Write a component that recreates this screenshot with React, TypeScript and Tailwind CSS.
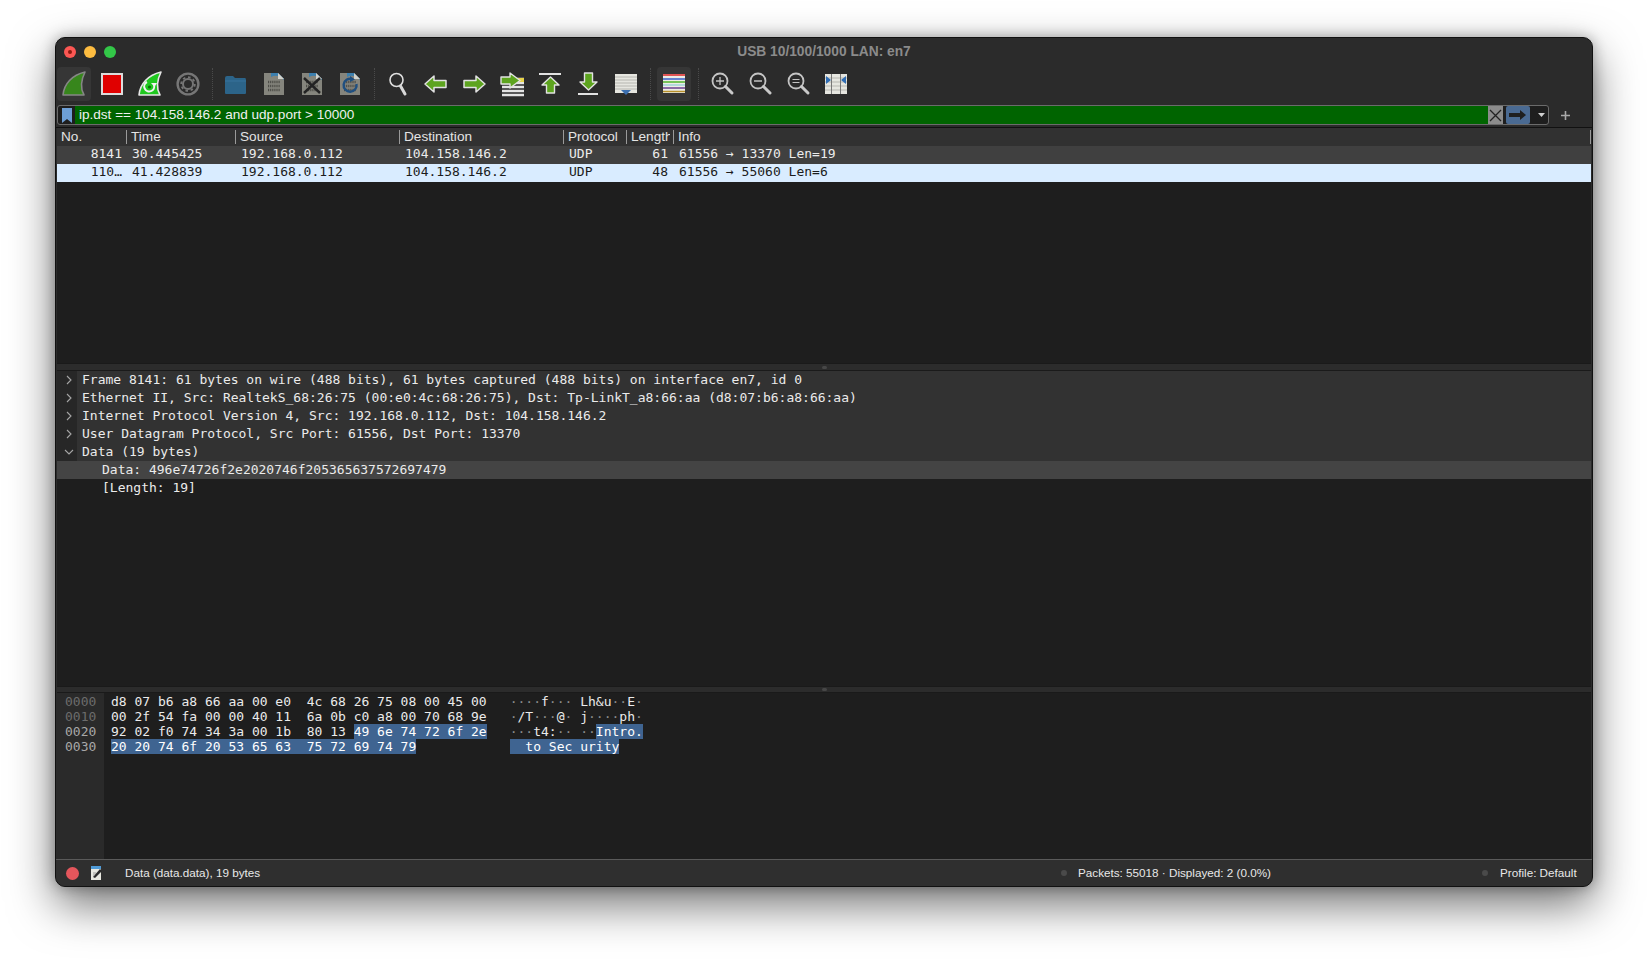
import React from 'react';

const Icon: React.FC<{ children: React.ReactNode; active?: boolean }> = ({ children, active }) => (
  <div className={`flex h-[34px] w-[34px] shrink-0 items-center justify-center rounded-[4px] ${active ? 'bg-[#363636]' : ''}`}>
    <svg width="32" height="32" viewBox="0 0 32 32" fill="none">
      {children}
    </svg>
  </div>
);

const Sep = () => (
  <div className="flex h-[34px] w-[6px] shrink-0 justify-center py-[1px]">
    <div className="h-full border-l border-dotted border-[#4a4a4a]" />
  </div>
);

const FileShape: React.FC<{ children?: React.ReactNode }> = ({ children }) => (
  <g>
    <path d="M6 5 H20 L26 11 V27 H6 Z" fill="#85857d" />
    <path d="M13 5 H20 L26 11 V12 C21 7 17 7 13 9 Z" fill="#3c7fae" />
    <path d="M20 5 V11 H26 Z" fill="#d2d2cc" />
    {[14, 18, 22].map((y) => (
      <line key={y} x1="10" x2="22" y1={y} y2={y} stroke="#4c4c47" strokeWidth="2.4" strokeDasharray="1.2 0.9" />
    ))}
    {children}
  </g>
);

const Lens: React.FC<{ children?: React.ReactNode }> = ({ children }) => (
  <g>
    <circle cx="14" cy="13" r="7.5" stroke="#c4c4c4" strokeWidth="1.8" />
    <path d="M19.5 18.5 L26 25" stroke="#c9c9c9" strokeWidth="3" strokeLinecap="round" />
    {children}
  </g>
);

const Toolbar = () => (
  <div className="flex h-[39px] shrink-0 items-start gap-[4px] pl-[1px] pt-[1px]">
    <Icon active>
      <path d="M5 27 C6 16 14 7 27 4 C23 12 22 20 26 27 Z" fill="#37861c" stroke="#868686" strokeWidth="1.6" strokeLinejoin="round" />
    </Icon>
    <Icon>
      <rect x="6" y="6" width="20" height="20" fill="#e00000" stroke="#dcdcdc" strokeWidth="2" />
    </Icon>
    <Icon>
      <path d="M5 27 C6 16 14 7 27 4 C23 12 22 20 26 27 Z" fill="#1fc81f" stroke="#e6e6e6" strokeWidth="1.6" strokeLinejoin="round" />
      <path d="M20 17 A5 5 0 1 1 13 14" stroke="#f2f2f2" strokeWidth="2" />
      <path d="M17 15 L20.5 19 L23 15 Z" fill="#f2f2f2" />
      <circle cx="15.5" cy="19" r="1.6" fill="#0c6d0c" />
    </Icon>
    <Icon>
      <circle cx="16" cy="16" r="10.4" stroke="#767676" strokeWidth="2.4" />
      <circle cx="16" cy="16" r="5" stroke="#767676" strokeWidth="2" />
      <circle cx="16" cy="16" r="6.8" stroke="#767676" strokeWidth="1.8" strokeDasharray="2.6 2.7" />
    </Icon>
    <Sep />
    <Icon>
      <path d="M5 10 Q5 8 7 8 H13 L15 10 H25 Q26 10 26 12 V25 Q26 26 25 26 H6 Q5 26 5 25 Z" fill="#2c6489" />
      <path d="M5 13 H26" stroke="#37729c" strokeWidth="1" />
    </Icon>
    <Icon>
      <FileShape />
    </Icon>
    <Icon>
      <FileShape>
        <path d="M8 10 L24 25 M24 10 L8 25" stroke="#232323" strokeWidth="2.4" />
      </FileShape>
    </Icon>
    <Icon>
      <FileShape>
        <path d="M18 11 A6.5 6.5 0 1 0 22.5 16" stroke="#1f4f80" strokeWidth="2.4" />
        <path d="M16 8 L21 11.5 L16 14 Z" fill="#1f4f80" />
      </FileShape>
    </Icon>
    <Sep />
    <Icon>
      <circle cx="14.5" cy="12" r="6.5" stroke="#dedede" strokeWidth="1.6" />
      <path d="M18.5 18 L23 26" stroke="#d8d8d8" strokeWidth="3" strokeLinecap="round" />
    </Icon>
    <Icon>
      <path d="M5 16 L14 8 V12.5 H26 V19.5 H14 V24 Z" fill="#5da41f" stroke="#e2e2e2" strokeWidth="1.5" strokeLinejoin="round" />
    </Icon>
    <Icon>
      <path d="M27 16 L18 8 V12.5 H6 V19.5 H18 V24 Z" fill="#5da41f" stroke="#e2e2e2" strokeWidth="1.5" strokeLinejoin="round" />
    </Icon>
    <Icon>
      <path d="M6 11 H28 M6 15 H28 M6 19 H28 M6 23 H28 M6 27 H28" stroke="#e4e4e4" strokeWidth="2.4" />
      <rect x="22" y="10" width="6" height="4" fill="#e8d44a" />
      <path d="M5 9 H14 V5 L24 12.5 L14 20 V16 H5 Z" fill="#5da41f" stroke="#e2e2e2" strokeWidth="1.4" strokeLinejoin="round" />
    </Icon>
    <Icon>
      <path d="M5 6 H27" stroke="#e2e2e2" strokeWidth="1.8" />
      <path d="M16.5 9 L25 17 H20.5 V25 H12.5 V17 H8 Z" fill="#5da41f" stroke="#e2e2e2" strokeWidth="1.4" strokeLinejoin="round" />
    </Icon>
    <Icon>
      <path d="M6 26 H26" stroke="#e2e2e2" strokeWidth="1.8" />
      <path d="M16.5 22 L25 14 H20.5 V5 H12.5 V14 H8 Z" fill="#5da41f" stroke="#e2e2e2" strokeWidth="1.4" strokeLinejoin="round" />
    </Icon>
    <Icon>
      <rect x="5" y="6" width="22" height="19" fill="#e6e6e0" />
      <path d="M5 9 H27 M5 12 H27 M5 15 H27 M5 18 H27 M5 21 H27" stroke="#a9a9a4" strokeWidth="0.8" />
      <path d="M11 22 H21 L16 27 Z" fill="#3c6fb0" />
    </Icon>
    <Sep />
    <Icon active>
      <rect x="5" y="6" width="22" height="19" fill="#ecece6" />
      <path d="M5 7 H27" stroke="#dd2222" strokeWidth="1.3" />
      <path d="M5 11 H27" stroke="#3a5fc8" strokeWidth="1.3" />
      <path d="M5 14 H27" stroke="#4fb52a" strokeWidth="1.3" />
      <path d="M5 17 H27" stroke="#9fd3d8" strokeWidth="1.3" />
      <path d="M5 20 H27" stroke="#6b3f8f" strokeWidth="1.3" />
      <path d="M5 23.5 H27" stroke="#b8912a" strokeWidth="1.3" />
    </Icon>
    <Sep />
    <Icon>
      <Lens>
        <path d="M10 13 H18 M14 9 V17" stroke="#c4c4c4" strokeWidth="1.3" />
      </Lens>
    </Icon>
    <Icon>
      <Lens>
        <path d="M10 13 H18" stroke="#c4c4c4" strokeWidth="1.3" />
      </Lens>
    </Icon>
    <Icon>
      <Lens>
        <path d="M10.5 11.5 H17.5 M10.5 14.5 H17.5" stroke="#c4c4c4" strokeWidth="1.2" />
      </Lens>
    </Icon>
    <Icon>
      <rect x="5" y="6" width="22" height="20" fill="#e6e6e0" />
      <path d="M5 10 H27 M5 14 H27 M5 18 H27 M5 22 H27" stroke="#a9a9a4" strokeWidth="0.8" />
      <path d="M11.5 6 V26 M20.5 6 V26" stroke="#777" strokeWidth="1" />
      <path d="M6 8 L11 12 L6 16 Z M26 8 L21 12 L26 16 Z" fill="#2f6db5" />
    </Icon>
  </div>
);

const FilterBar = () => (
  <div className="flex h-[22px] shrink-0 items-start pl-[1px]">
    <div className="flex h-[20px] w-[1492px] items-stretch overflow-hidden rounded-[3px] border border-[#6b6b6b] bg-[#1e1e1e]">
      <div className="flex w-[17px] shrink-0 items-center justify-center">
        <svg width="10" height="15" viewBox="0 0 10 15">
          <path d="M0 0 H10 V15 L5 11 L0 15 Z" fill="#6d9fd6" />
        </svg>
      </div>
      <div className="flex flex-1 items-center bg-[#006400] pl-[4px] text-[13.55px] text-[#f0f0f0]">
        ip.dst == 104.158.146.2 and udp.port &gt; 10000
      </div>
      <div className="flex w-[15px] shrink-0 items-center justify-center bg-[#8c8c8c]">
        <svg width="13" height="13" viewBox="0 0 13 13">
          <path d="M1 1 L12 12 M12 1 L1 12" stroke="#222" strokeWidth="1.3" />
        </svg>
      </div>
      <div className="ml-[3px] flex w-[24px] shrink-0 items-center justify-center rounded-[2px] bg-[#4a6a92]">
        <svg width="18" height="10" viewBox="0 0 18 10">
          <path d="M0 3 H11 V0 L17 5 L11 10 V7 H0 Z" fill="#1f1f1f" />
        </svg>
      </div>
      <div className="flex flex-1 grow-0 basis-[18px] items-center justify-center pl-[4px]">
        <svg width="7" height="4" viewBox="0 0 7 4">
          <path d="M0 0 H7 L3.5 4 Z" fill="#d0d0d0" />
        </svg>
      </div>
    </div>
    <div className="ml-[10px] flex h-[20px] w-[12px] items-center justify-center">
      <svg width="9" height="9" viewBox="0 0 9 9">
        <path d="M4.5 0 V9 M0 4.5 H9" stroke="#a8a8a8" strokeWidth="1.6" />
      </svg>
    </div>
  </div>
);

const headers = ['No.', 'Time', 'Source', 'Destination', 'Protocol', 'Length', 'Info'];

const packets = [
  ['8141', '30.445425', '192.168.0.112', '104.158.146.2', 'UDP', '61', '61556 → 13370 Len=19'],
  ['110…', '41.428839', '192.168.0.112', '104.158.146.2', 'UDP', '48', '61556 → 55060 Len=6'],
];

const gridCols = 'grid grid-cols-[69px_109px_164px_164px_63px_47px_1fr]';

const PacketList = () => (
  <div className="flex h-[235px] shrink-0 flex-col bg-[#1e1e1e]">
    <div className={`${gridCols} h-[18px] shrink-0 items-center bg-[#313131] text-[13.6px] text-[#e4e4e4]`}>
      {headers.map((h, i) => (
        <div
          key={h}
          className={`h-[14px] pl-[4px] pr-[3px] leading-[14px] ${i > 0 ? 'border-l border-[#9a9a9a]' : ''} ${i === 6 ? 'border-r' : ''}`}
        >
          <div className="overflow-hidden whitespace-nowrap">{h}</div>
        </div>
      ))}
    </div>
    {packets.map((p, r) => (
      <div
        key={p[0]}
        className={`${gridCols} h-[18px] shrink-0 items-start font-['DejaVu_Sans_Mono',monospace] text-[13px] leading-[16px] ${
          r === 1 ? 'bg-[#d9ecff] text-[#1c1c1c]' : 'bg-[#404040] text-[#ececec]'
        }`}
      >
        <div className="pr-[4px] text-right">{p[0]}</div>
        <div className="pl-[6px]">{p[1]}</div>
        <div className="pl-[6px]">{p[2]}</div>
        <div className="pl-[6px]">{p[3]}</div>
        <div className="pl-[6px]">{p[4]}</div>
        <div className="pr-[5px] text-right">{p[5]}</div>
        <div className="pl-[6px] whitespace-pre">{p[6]}</div>
      </div>
    ))}
  </div>
);

const Splitter: React.FC<{ h: string }> = ({ h }) => (
  <div className={`flex ${h} shrink-0 items-center justify-center border-y border-[#1a1a1a] bg-[#2c2c2c]`}>
    <div className="h-[3px] w-[5px] rounded-full bg-[#474747]" />
  </div>
);

const tree = [
  'Frame 8141: 61 bytes on wire (488 bits), 61 bytes captured (488 bits) on interface en7, id 0',
  'Ethernet II, Src: RealtekS_68:26:75 (00:e0:4c:68:26:75), Dst: Tp-LinkT_a8:66:aa (d8:07:b6:a8:66:aa)',
  'Internet Protocol Version 4, Src: 192.168.0.112, Dst: 104.158.146.2',
  'User Datagram Protocol, Src Port: 61556, Dst Port: 13370',
  'Data (19 bytes)',
];

const PacketDetails = () => (
  <div className="flex h-[315px] shrink-0 flex-col bg-[#1e1e1e] font-['DejaVu_Sans_Mono',monospace] text-[13px] leading-[18px] text-[#ebebeb]">
    {tree.map((line, i) => (
      <div key={line} className="flex h-[18px] shrink-0">
        <div className="flex w-[20px] shrink-0 items-center justify-center bg-[#272727] pl-[4px]">
          <svg width="10" height="10" viewBox="0 0 10 10" fill="none">
            <path d={i === 4 ? 'M1 3 L5 7 L9 3' : 'M3 1 L7 5 L3 9'} stroke="#a6a6a6" strokeWidth="1.1" />
          </svg>
        </div>
        <div className="flex-1 whitespace-pre bg-[#323232] pl-[5px]">{line}</div>
      </div>
    ))}
    <div className="h-[18px] shrink-0 bg-[#444444] pl-[45px]">Data: 496e74726f2e2020746f205365637572697479</div>
    <div className="h-[18px] shrink-0 pl-[45px]">[Length: 19]</div>
  </div>
);

type Seg = [string, boolean];

const hexRows: { off: string; dim: boolean; hex: Seg[]; ascii: Seg[] }[] = [
  {
    off: '0000',
    dim: true,
    hex: [['d8 07 b6 a8 66 aa 00 e0  4c 68 26 75 08 00 45 00', false]],
    ascii: [['····f··· Lh&u··E·', false]],
  },
  {
    off: '0010',
    dim: true,
    hex: [['00 2f 54 fa 00 00 40 11  6a 0b c0 a8 00 70 68 9e', false]],
    ascii: [['·/T···@· j····ph·', false]],
  },
  {
    off: '0020',
    dim: false,
    hex: [
      ['92 02 f0 74 34 3a 00 1b  80 13 ', false],
      ['49 6e 74 72 6f 2e', true],
    ],
    ascii: [
      ['···t4:·· ··', false],
      ['Intro.', true],
    ],
  },
  {
    off: '0030',
    dim: false,
    hex: [['20 20 74 6f 20 53 65 63  75 72 69 74 79', true]],
    ascii: [['  to Sec urity', true]],
  },
];

const AsciiSeg: React.FC<{ text: string; on: boolean }> = ({ text, on }) => (
  <span className={on ? 'bg-[#3f6491] text-white' : ''}>
    {text.split('').map((c, i) => (
      <span key={i} className={c === '·' ? 'text-[#8a8a8a]' : ''}>
        {c}
      </span>
    ))}
  </span>
);

const HexDump = () => (
  <div className="flex min-h-0 flex-1 bg-[#1e1e1e] font-['DejaVu_Sans_Mono',monospace] text-[13px] leading-[15px] text-[#ebebeb]">
    <div className="w-[47px] shrink-0 bg-[#2a2a2a] pl-[8px] pt-[1px]">
      {hexRows.map((r) => (
        <div key={r.off} className={`h-[15px] ${r.dim ? 'text-[#6c6c6c]' : 'text-[#a8a8a8]'}`}>
          {r.off}
        </div>
      ))}
    </div>
    <div className="pl-[7px] pt-[1px]">
      {hexRows.map((r) => (
        <div key={r.off} className="h-[15px] whitespace-pre">
          {r.hex.map(([t, on]) => (
            <span key={t} className={on ? 'bg-[#3f6491] text-white' : ''}>
              {t}
            </span>
          ))}
        </div>
      ))}
    </div>
    <div className="pl-[23px] pt-[1px]">
      {hexRows.map((r) => (
        <div key={r.off} className="h-[15px] whitespace-pre">
          {r.ascii.map(([t, on]) => (
            <AsciiSeg key={t} text={t} on={on} />
          ))}
        </div>
      ))}
    </div>
  </div>
);

const StatusBar = () => (
  <div className="flex h-[27px] shrink-0 items-center border-t border-[#5a5a5a] bg-[#2f2f2f] text-[11.7px] text-[#e8e8e8]">
    <div className="ml-[10px] h-[13px] w-[13px] rounded-full bg-[#e4565c]" />
    <svg className="ml-[11px]" width="14" height="14" viewBox="0 0 14 14">
      <rect x="1" y="2" width="10" height="12" fill="#e8e8e0" />
      <rect x="1" y="0" width="10" height="3" fill="#4f9bd8" />
      <path d="M3 11 L10 3 L12 5 L5 12 Z" fill="#2a2a2a" />
      <path d="M3 7 H6 M3 9 H5" stroke="#888" strokeWidth="0.8" />
    </svg>
    <div className="ml-[21px] w-[936px] shrink-0">Data (data.data), 19 bytes</div>
    <div className="h-[6px] w-[6px] rounded-full bg-[#4a4a4a]" />
    <div className="ml-[11px] w-[404px] shrink-0">Packets: 55018 · Displayed: 2 (0.0%)</div>
    <div className="h-[6px] w-[6px] rounded-full bg-[#4a4a4a]" />
    <div className="ml-[12px]">Profile: Default</div>
  </div>
);

export default function App() {
  return (
    <div className="h-[960px] w-[1648px] overflow-hidden bg-white pl-[55px] pt-[37px] font-['Liberation_Sans',Arial,sans-serif]">
      <div className="flex h-[850px] w-[1538px] flex-col overflow-hidden rounded-[10px] border border-[#111111] bg-[#2b2b2b] shadow-[0_18px_45px_rgba(0,0,0,0.55),0_0_14px_rgba(0,0,0,0.3)]">
        <div className="relative flex h-[28px] shrink-0 items-center justify-center">
          <div className="absolute left-[8px] top-[8px] flex gap-[8px]">
            <div className="flex h-[12px] w-[12px] items-center justify-center rounded-full bg-[#fc5753]">
              <div className="h-[4px] w-[4px] rounded-full bg-[#8c1a10]" />
            </div>
            <div className="h-[12px] w-[12px] rounded-full bg-[#fdbc40]" />
            <div className="h-[12px] w-[12px] rounded-full bg-[#33c748]" />
          </div>
          <span className="text-[13.75px] font-bold text-[#8b8b8b]">USB 10/100/1000 LAN: en7</span>
        </div>
        <Toolbar />
        <FilterBar />
        <div className="flex min-h-0 flex-1 flex-col border-t border-[#111111]">
          <div className="flex min-h-0 flex-1 flex-col px-[1px]">
            <PacketList />
            <Splitter h="h-[8px]" />
            <PacketDetails />
            <Splitter h="h-[7px]" />
            <HexDump />
          </div>
          <StatusBar />
        </div>
      </div>
    </div>
  );
}
